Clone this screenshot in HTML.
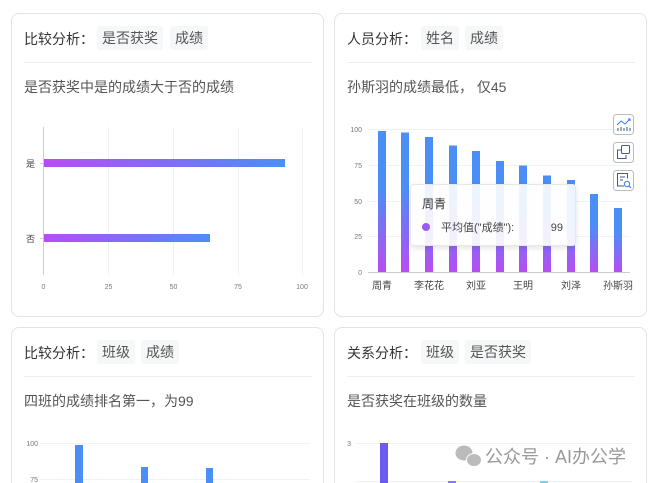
<!DOCTYPE html>
<html><head><meta charset="utf-8"><style>
*{margin:0;padding:0;box-sizing:border-box}
html,body{width:654px;height:483px;overflow:hidden}
body{background:#fff;font-family:"Liberation Sans","Noto Sans CJK SC",sans-serif;position:relative;color:#333}
.card{position:absolute;border:1px solid #e3e3e3;border-radius:8px;background:#fff;overflow:hidden}
.cb{border-bottom:none;border-radius:8px 8px 0 0}
.a{position:absolute;white-space:nowrap}
.h{font-size:14px;color:#333}
.tag{position:absolute;background:#f6f7f9;border-radius:3px;font-size:14px;color:#555;height:24px;line-height:24px;padding:0 5px;white-space:nowrap}
.line{position:absolute;height:1px;background:#eee}
.sub{font-size:14px;color:#555}
svg text{font-family:"Liberation Sans","Noto Sans CJK SC",sans-serif}
</style></head><body>
<svg width="0" height="0" style="position:absolute"><defs>
<linearGradient id="gh" x1="0" x2="1" y1="0" y2="0"><stop offset="0" stop-color="#b84cf4"/><stop offset="1" stop-color="#4b8ef8"/></linearGradient>
<linearGradient id="gv" x1="0" x2="0" y1="1" y2="0"><stop offset="0" stop-color="#b84cf4"/><stop offset="0.6" stop-color="#4b8ef8"/><stop offset="1" stop-color="#4b8ef8"/></linearGradient>
<filter id="sh" x="-10%" y="-20%" width="120%" height="150%"><feDropShadow dx="0" dy="2" stdDeviation="3" flood-opacity="0.12"/></filter>
</defs></svg>

<div class="card" style="left:11px;top:13px;width:313px;height:304px"></div>
<div class="card" style="left:334px;top:13px;width:313px;height:304px"></div>
<div class="card cb" style="left:11px;top:327px;width:313px;height:156px"></div>
<div class="card cb" style="left:334px;top:327px;width:313px;height:156px"></div>

<!-- card 1 -->
<div class="a h" style="left:24px;top:29px">比较分析：</div>
<div class="tag" style="left:97px;top:26px">是否获奖</div>
<div class="tag" style="left:170px;top:26px">成绩</div>
<div class="line" style="left:24px;top:62px;width:288px"></div>
<div class="a sub" style="left:24px;top:77px">是否获奖中是的成绩大于否的成绩</div>
<svg class="a" style="left:0;top:0" width="330" height="310">
<g stroke="#f0f0f0"><line x1="108.5" y1="127" x2="108.5" y2="275"/><line x1="173.5" y1="127" x2="173.5" y2="275"/><line x1="238.5" y1="127" x2="238.5" y2="275"/><line x1="302.5" y1="127" x2="302.5" y2="275"/></g>
<line x1="43.5" y1="127" x2="43.5" y2="275" stroke="#ccc"/>
<line x1="40" y1="163.5" x2="43" y2="163.5" stroke="#ccc"/><line x1="40" y1="238.5" x2="43" y2="238.5" stroke="#ccc"/>
<rect x="44" y="159" width="241" height="8" fill="url(#gh)"/>
<rect x="44" y="234" width="166" height="8" fill="url(#gh)"/>
<g font-size="9" fill="#444"><text x="26" y="167">是</text><text x="26" y="242">否</text></g>
<g font-size="7" fill="#777" text-anchor="middle"><text x="43.5" y="289">0</text><text x="108.5" y="289">25</text><text x="173.5" y="289">50</text><text x="238" y="289">75</text><text x="302" y="289">100</text></g>
</svg>

<!-- card 2 -->
<div class="a h" style="left:347px;top:29px">人员分析：</div>
<div class="tag" style="left:421px;top:26px">姓名</div>
<div class="tag" style="left:465px;top:26px">成绩</div>
<div class="line" style="left:347px;top:62px;width:288px"></div>
<div class="a sub" style="left:347px;top:77px">孙斯羽的成绩最低， 仅45</div>
<svg class="a" style="left:0;top:0" width="654" height="310">
<g stroke="#f2f2f2"><line x1="368" y1="129.5" x2="630" y2="129.5"/><line x1="368" y1="165.5" x2="630" y2="165.5"/><line x1="368" y1="201.5" x2="630" y2="201.5"/><line x1="368" y1="236.5" x2="630" y2="236.5"/></g>
<line x1="368" y1="272.5" x2="630" y2="272.5" stroke="#ccc"/>
<g font-size="7" fill="#777" text-anchor="end"><text x="362" y="132">100</text><text x="362" y="168">75</text><text x="362" y="204">50</text><text x="362" y="239">25</text><text x="362" y="275">0</text></g>
<g fill="url(#gv)">
<rect x="378" y="131" width="8" height="141"/><rect x="401" y="132.5" width="8" height="139.5"/><rect x="425" y="137" width="8" height="135"/><rect x="449" y="145.5" width="8" height="126.5"/><rect x="472" y="151" width="8" height="121"/><rect x="496" y="161" width="8" height="111"/><rect x="519" y="165.5" width="8" height="106.5"/><rect x="543" y="175.5" width="8" height="96.5"/><rect x="567" y="180" width="8" height="92"/><rect x="590" y="194" width="8" height="78"/><rect x="614" y="208" width="8" height="64"/>
</g>
<g font-size="10" fill="#444" text-anchor="middle"><text x="382" y="289">周青</text><text x="429" y="289">李花花</text><text x="476" y="289">刘亚</text><text x="523" y="289">王明</text><text x="571" y="289">刘泽</text><text x="618" y="289">孙斯羽</text></g>
<rect x="410.5" y="184.5" width="165" height="61" rx="3" fill="#fff" fill-opacity="0.9" stroke="#e8e8e8" filter="url(#sh)"/>
<text x="422" y="208" font-size="12" fill="#333">周青</text>
<circle cx="426" cy="227" r="4" fill="#9a5cf6"/>
<text x="441" y="231" font-size="11" fill="#444">平均值("成绩"):</text>
<text x="563" y="231" font-size="11" fill="#444" text-anchor="end">99</text>
<g fill="none" stroke="#4a5a88" stroke-width="1">
<rect x="613.5" y="114.5" width="20" height="20" rx="3" stroke="#bbb"/>
<path d="M617 125l4-4 4 3 5-5M628 119h2v2" stroke="#3a7af0"/>
<path d="M618 131v-3M621 131v-4M624 131v-3M627 131v-4M630 131v-3"/>
<rect x="613.5" y="142.5" width="20" height="20" rx="3" stroke="#bbb"/>
<rect x="621.5" y="145.5" width="8" height="8" rx="1"/><path d="M621 150h-3.5v8.5h8.5v-3.5"/>
<rect x="613.5" y="170.5" width="20" height="20" rx="3" stroke="#bbb"/>
<path d="M624 186h-6.5v-12.5h10v5M620 177h5M620 180h3"/><circle cx="627" cy="184" r="2.7" stroke="#3a7af0"/><path d="M629 186l2 2" stroke="#3a7af0"/>
</g>
</svg>

<!-- card 3 -->
<div class="a h" style="left:24px;top:343px">比较分析：</div>
<div class="tag" style="left:97px;top:340px">班级</div>
<div class="tag" style="left:141px;top:340px">成绩</div>
<div class="line" style="left:24px;top:376px;width:288px"></div>
<div class="a sub" style="left:24px;top:391px">四班的成绩排名第一，为99</div>

<!-- card 4 -->
<div class="a h" style="left:347px;top:343px">关系分析：</div>
<div class="tag" style="left:421px;top:340px">班级</div>
<div class="tag" style="left:465px;top:340px">是否获奖</div>
<div class="line" style="left:347px;top:376px;width:288px"></div>
<div class="a sub" style="left:347px;top:391px">是否获奖在班级的数量</div>

<svg class="a" style="left:0;top:0" width="654" height="483">
<g stroke="#f2f2f2"><line x1="40" y1="443.5" x2="310" y2="443.5"/><line x1="40" y1="479.5" x2="310" y2="479.5"/><line x1="356" y1="443.5" x2="632" y2="443.5"/><line x1="356" y1="481.5" x2="632" y2="481.5"/></g>
<g font-size="7" fill="#777" text-anchor="end"><text x="38" y="446">100</text><text x="38" y="482">75</text><text x="351" y="446">3</text></g>
<g fill="#4b8ef8"><rect x="75" y="445" width="8" height="38"/><rect x="141" y="467" width="7" height="16"/><rect x="206" y="468" width="7" height="15"/></g>
<rect x="380" y="443" width="8" height="40" fill="#6a5cf0"/>
<rect x="448" y="481" width="8" height="2" fill="#8a7cf0"/>
<rect x="540" y="481" width="8" height="2" fill="#7cd0f0"/>
<g fill="#bbb"><ellipse cx="464" cy="453" rx="8.5" ry="7.5"/><ellipse cx="474" cy="460" rx="7.5" ry="6.5" stroke="#fff" stroke-width="1"/></g>
<text x="485" y="463" font-size="18" fill="#999">公众号 · AI办公学</text>
</svg>
</body></html>
